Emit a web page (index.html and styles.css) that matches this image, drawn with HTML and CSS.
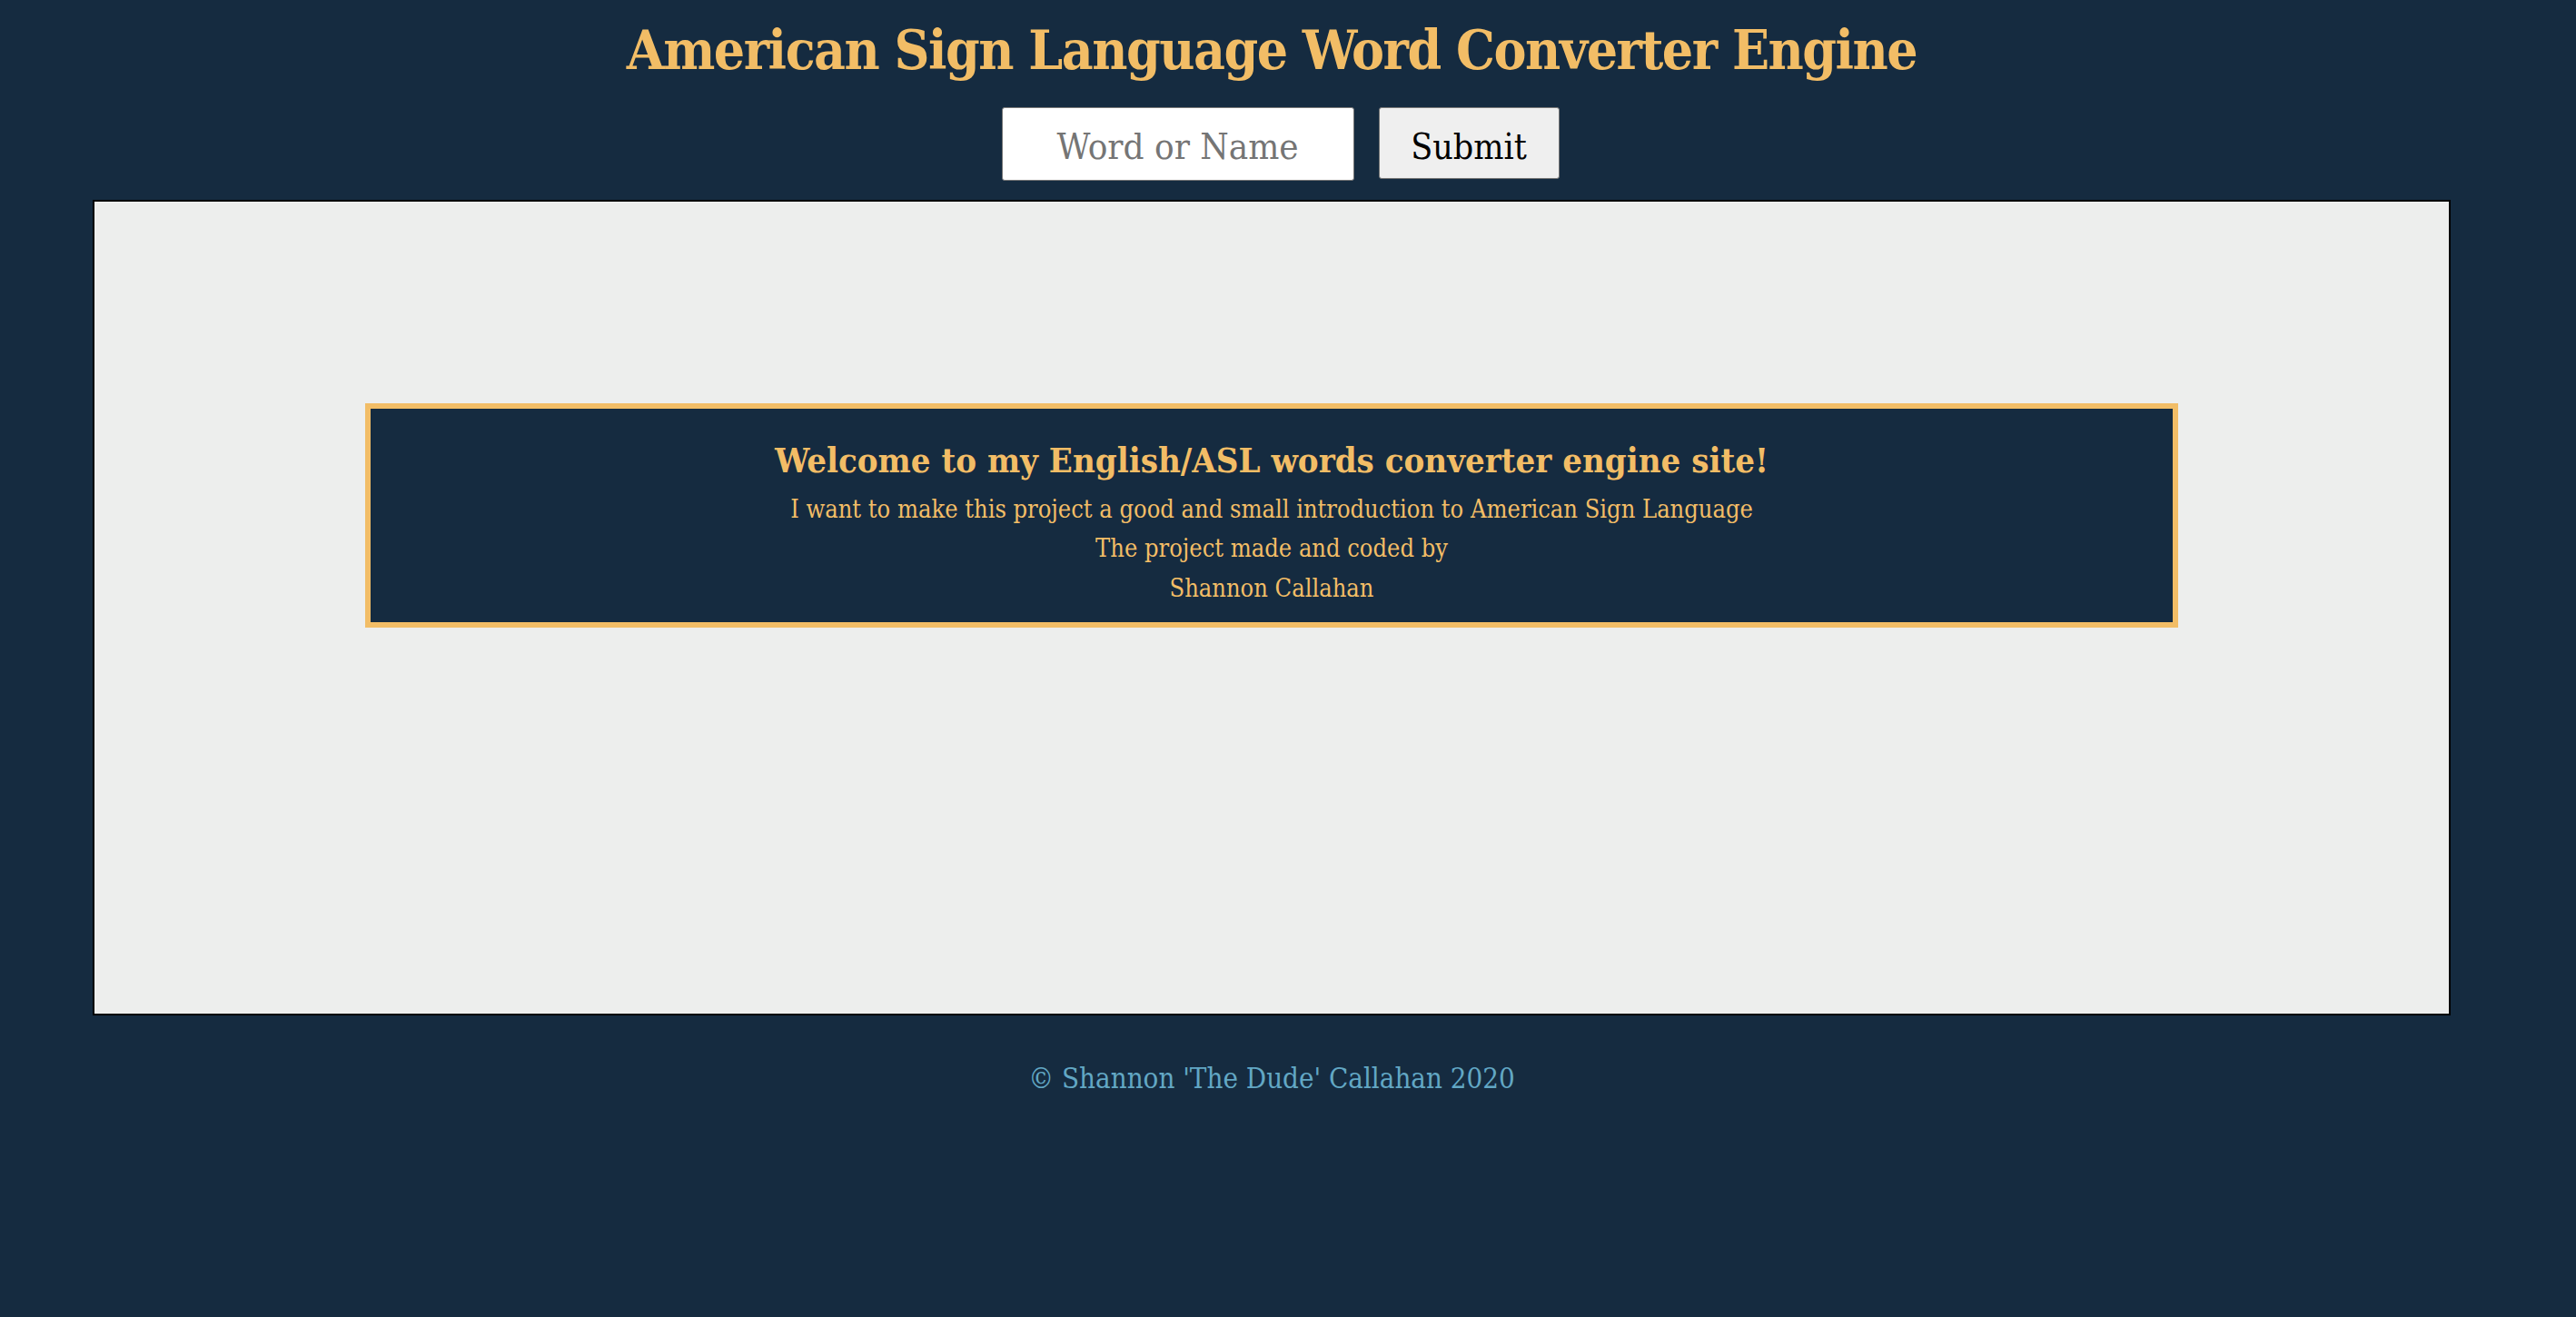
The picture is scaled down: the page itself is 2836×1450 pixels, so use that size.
FILE: index.html
```html
<!DOCTYPE html>
<html lang="en">
<head>
<meta charset="utf-8">
<title>American Sign Language Word Converter Engine</title>
<link rel="stylesheet" href="styles.css">
</head>
<body>
<div class="page">
  <h1 class="title">American Sign Language Word Converter Engine</h1>
  <form class="search">
    <input class="word-input" type="text" placeholder="Word or Name">
    <button class="submit-btn" type="button">Submit</button>
  </form>
  <main class="stage">
    <section class="welcome">
      <h2 class="welcome-title">Welcome to my English/ASL words converter engine site!</h2>
      <p class="welcome-text">I want to make this project a good and small introduction to American Sign Language<br>The project made and coded by<br>Shannon Callahan</p>
    </section>
  </main>
  <footer class="footer">© Shannon 'The Dude' Callahan 2020</footer>
</div>
</body>
</html>
```

FILE: styles.css
```css
html, body {
  margin: 0;
  padding: 0;
  background: #152b40;
  height: 100%;
}

body {
  font-family: "DejaVu Serif Condensed", "DejaVu Serif", serif;
  font-stretch: condensed;
}

.page {
  width: 2800px;
  display: flex;
  flex-direction: column;
  align-items: stretch;
}

.title {
  margin: 0;
  padding-top: 18px;
  font-size: 60px;
  line-height: 74px;
  letter-spacing: -1.5px;
  font-weight: bold;
  color: #f2bd66;
  text-align: center;
}

.search {
  margin: 26px 0 0 0;
  padding-left: 19px;
  display: flex;
  justify-content: center;
  align-items: flex-start;
  gap: 27px;
}

.word-input {
  box-sizing: border-box;
  width: 388px;
  height: 81px;
  border: 1px solid #767676;
  border-radius: 3px;
  background: #ffffff;
  font-family: inherit;
  font-stretch: condensed;
  font-size: 40px;
  text-align: center;
  color: #000;
  padding: 5px 0 0 0;
}

.word-input::placeholder {
  color: #757575;
}

.submit-btn {
  box-sizing: border-box;
  width: 199px;
  height: 79px;
  border: 1px solid #767676;
  border-radius: 3px;
  background: #efefef;
  font-family: inherit;
  font-stretch: condensed;
  font-size: 39px;
  color: #000;
  padding: 8px 0 0 0;
}

.stage {
  margin: 21px 102px 0 102px;
  height: 898px;
  box-sizing: border-box;
  border: 2px solid #000;
  background: #edeeed;
  padding-top: 222px;
}

.welcome {
  box-sizing: border-box;
  width: 1996px;
  height: 247px;
  margin: 0 auto;
  border: 6px solid #f2bd66;
  background: #152b40;
  padding-top: 35px;
  text-align: center;
  color: #f2bd66;
}

.welcome-title {
  margin: 0;
  font-size: 38px;
  line-height: 44px;
  font-weight: bold;
}

.welcome-text {
  margin: 10px 0 0 0;
  font-size: 27px;
  line-height: 43.4px;
}

.footer {
  margin-top: 49px;
  font-size: 31px;
  line-height: 40px;
  color: #62a7c4;
  text-align: center;
}
```
